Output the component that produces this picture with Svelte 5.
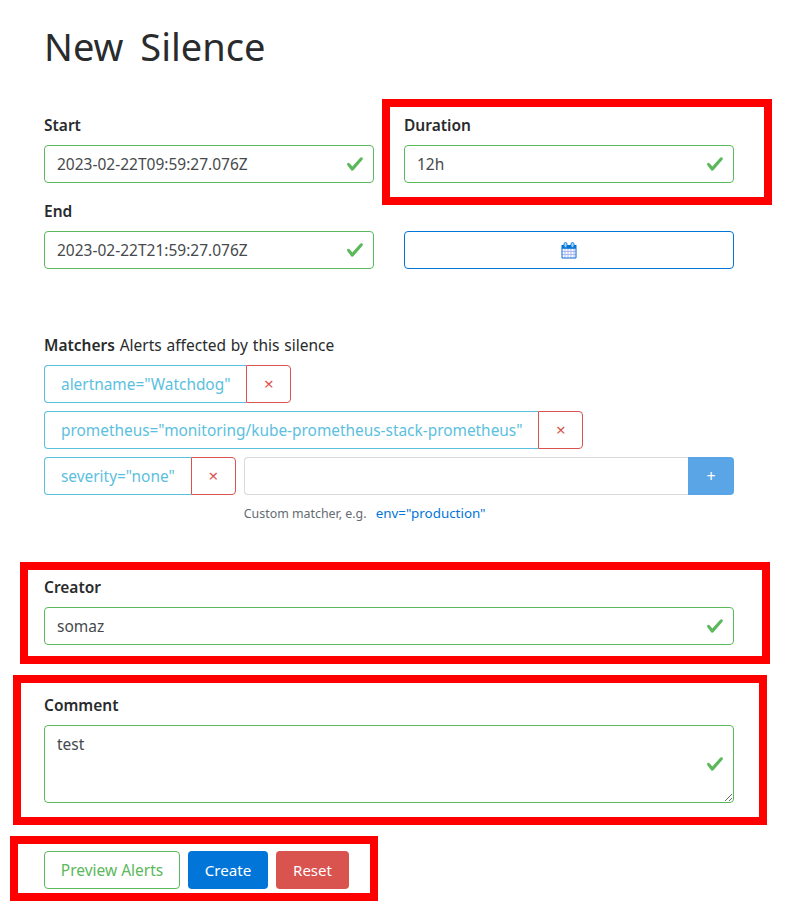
<script>
  const okPath = 'M2.3 6.73L.6 4.53c-.4-1.04.46-1.4 1.1-.8l1.1 1.4 3.4-3.8c.6-.63 1.6-.27 1.2.7l-4 4.6c-.43.5-.8.4-1.1.1z';

  const matchersTop = ['alertname="Watchdog"', 'prometheus="monitoring/kube-prometheus-stack-prometheus"'];
</script>

{#snippet check()}
  <svg class="check" viewBox="0 0 8 8" width="18" height="18"><path d={okPath} /></svg>
{/snippet}

{#snippet tag(text)}
  <div class="tag">
    <span class="tag-text">{text}</span>
    <button class="tag-remove" type="button">×</button>
  </div>
{/snippet}

<div class="page">
  <h1>New Silence</h1>

  <form>
    <div class="dates">
      <div class="field">
        <label for="start">Start</label>
        <div class="control">
          <input id="start" value="2023-02-22T09:59:27.076Z" />
          {@render check()}
        </div>
      </div>
      <div class="field">
        <label for="duration">Duration</label>
        <div class="control">
          <input id="duration" value="12h" />
          {@render check()}
        </div>
      </div>
      <div class="field">
        <label for="end">End</label>
        <div class="control">
          <input id="end" value="2023-02-22T21:59:27.076Z" />
          {@render check()}
        </div>
      </div>
      <div class="field field-button">
        <button class="btn btn-outline-blue btn-calendar" type="button" aria-label="Pick date">
          <svg viewBox="0 0 16 17" width="16" height="17">
            <rect class="cal-head" x="0.5" y="3" width="15" height="4" />
            <path class="cal-grid" d="M1 6.5h14v9.5H1zM1 9.5h14M1 12.5h14M4 6.5V16M7 6.5V16M10 6.5V16M13 6.5V16" />
            <path class="cal-edge" d="M1 6.5h14v9.5H1z" />
            <rect class="cal-ring" x="3" y="0.5" width="3" height="5" rx="1.5" />
            <rect class="cal-ring" x="10" y="0.5" width="3" height="5" rx="1.5" />
          </svg>
        </button>
      </div>
    </div>

    <div class="matchers">
      <p class="matchers-title"><strong>Matchers</strong> Alerts affected by this silence</p>
      {#each matchersTop as m}
        {@render tag(m)}
      {/each}
      <div class="matcher-row">
        {@render tag('severity="none"')}
        <div class="matcher-new">
          <div class="input-group">
            <input class="plain" />
            <button class="btn-add" type="button">+</button>
          </div>
          <small>Custom matcher, e.g. <code>env="production"</code></small>
        </div>
      </div>
    </div>

    <div class="field creator">
      <label for="creator">Creator</label>
      <div class="control">
        <input id="creator" value="somaz" />
        {@render check()}
      </div>
    </div>

    <div class="field comment">
      <label for="comment">Comment</label>
      <div class="control">
        <textarea id="comment" rows="3">test</textarea>
        {@render check()}
      </div>
    </div>

    <div class="actions">
      <button class="btn btn-outline-green btn-preview" type="button">Preview Alerts</button>
      <button class="btn btn-blue btn-create" type="button">Create</button>
      <button class="btn btn-red btn-reset" type="button">Reset</button>
    </div>
  </form>

  <!-- red annotation frames drawn over the page -->
  <div class="frame frame-duration"></div>
  <div class="frame frame-creator"></div>
  <div class="frame frame-comment"></div>
  <div class="frame frame-actions"></div>
</div>

<style>
  :global(body) {
    background: #fff;
  }

  .page {
    position: relative;
    width: 807px;
    height: 905px;
    box-sizing: border-box;
    padding: 0 73px 0 44px;
    overflow: hidden;
    font-family: "Noto Sans", "Open Sans", sans-serif;
    font-size: 15.5px;
    line-height: 24px;
    color: #292b2c;
  }

  h1 {
    margin: 0;
    padding-top: 22px;
    height: 48px;
    font-size: 38px;
    line-height: 48px;
    font-weight: 400;
    word-spacing: 7px;
  }

  form {
    margin-top: 43px;
  }

  .dates {
    display: grid;
    grid-template-columns: 330px 330px;
    column-gap: 30px;
    row-gap: 16px;
  }

  .field {
    display: flex;
    flex-direction: column;
  }

  .field-button {
    justify-content: flex-end;
  }

  label {
    display: block;
    height: 24px;
    margin-bottom: 8px;
    font-weight: 600;
    line-height: 25px;
  }

  .control {
    position: relative;
  }

  input,
  textarea {
    display: block;
    box-sizing: border-box;
    width: 100%;
    margin: 0;
    padding: 7px 36px 7px 12px;
    height: 38px;
    border: 1px solid #5cb85c;
    border-radius: 4px;
    background: #fff;
    color: #464a4c;
    font: inherit;
    line-height: 22px;
    outline: none;
  }

  textarea {
    height: 78px;
    resize: vertical;
  }

  .check {
    position: absolute;
    top: 50%;
    right: 10px;
    margin-top: -9px;
    fill: #5cb85c;
  }

  .btn {
    box-sizing: border-box;
    height: 38px;
    padding: 0;
    border: 1px solid transparent;
    border-radius: 4px;
    background: #fff;
    font: inherit;
    line-height: 22px;
  }

  .btn-calendar {
    display: flex;
    align-items: center;
    justify-content: center;
    width: 100%;
    height: 38px;
  }

  .btn-outline-blue {
    border-color: #0275d8;
  }

  .cal-head {
    fill: #0275d8;
  }

  .cal-grid {
    fill: #fff;
    stroke: #a9b8ee;
    stroke-width: 1;
  }

  .cal-edge {
    fill: none;
    stroke: #2f88dc;
    stroke-width: 1;
  }

  .cal-ring {
    fill: #a8d0f5;
    stroke: #0275d8;
    stroke-width: 0.8;
  }

  .matchers {
    margin-top: 64px;
    display: flex;
    flex-direction: column;
    align-items: flex-start;
    gap: 8px;
  }

  .matchers-title {
    margin: 0;
    height: 24px;
    line-height: 24px;
    word-spacing: 0.8px;
  }

  .matchers-title strong {
    font-weight: 600;
  }

  .tag {
    display: flex;
    height: 38px;
    flex: none;
  }

  .tag-text {
    box-sizing: border-box;
    height: 38px;
    padding: 7px 16px 5px;
    border: 1px solid #5bc0de;
    border-right: 0;
    border-radius: 4px 0 0 4px;
    color: #5bc0de;
    font-size: 15.4px;
    white-space: nowrap;
  }

  .tag-remove {
    box-sizing: border-box;
    width: 45px;
    height: 38px;
    padding: 0;
    border: 1px solid #d9534f;
    border-radius: 0 4px 4px 0;
    background: #fff;
    color: #d9534f;
    font: inherit;
    font-size: 17px;
  }

  .matcher-row {
    display: flex;
    gap: 8px;
    width: 100%;
  }

  .matcher-new {
    flex: 1;
  }

  .input-group {
    display: flex;
    height: 38px;
  }

  .plain {
    flex: 1;
    border-color: #d9d9d9;
    border-right: 0;
    border-radius: 4px 0 0 4px;
  }

  .btn-add {
    width: 46px;
    height: 38px;
    padding: 0;
    border: 0;
    border-radius: 0 4px 4px 0;
    background: #5aa5e6;
    color: #fff;
    font: inherit;
    font-size: 16px;
  }

  small {
    display: block;
    margin-top: 6px;
    height: 24px;
    font-size: 12.4px;
    color: #636c72;
  }

  code {
    margin-left: 6px;
    font-family: inherit;
    font-size: 13.4px;
    color: #0275d8;
  }

  .creator {
    margin-top: 50px;
  }

  .comment {
    margin-top: 48px;
  }

  .actions {
    display: flex;
    gap: 8px;
    margin-top: 48px;
  }

  .btn-preview {
    width: 136px;
    font-size: 15.5px;
  }

  .btn-create {
    width: 80px;
    font-size: 15.2px;
  }

  .btn-reset {
    width: 73px;
    font-size: 15px;
  }

  .btn-outline-green {
    border-color: #5cb85c;
    color: #5cb85c;
  }

  .btn-blue {
    background: #0275d8;
    color: #fff;
  }

  .btn-red {
    background: #d9534f;
    color: #fff;
  }

  .frame {
    position: absolute;
    box-sizing: border-box;
    border: 8px solid #ff0000;
    pointer-events: none;
  }

  .frame-duration {
    left: 382px;
    top: 99px;
    width: 390px;
    height: 106px;
  }

  .frame-creator {
    left: 20px;
    top: 562px;
    width: 750px;
    height: 102px;
  }

  .frame-comment {
    left: 13px;
    top: 675px;
    width: 754px;
    height: 150px;
  }

  .frame-actions {
    left: 10px;
    top: 836px;
    width: 368px;
    height: 65px;
  }
</style>
